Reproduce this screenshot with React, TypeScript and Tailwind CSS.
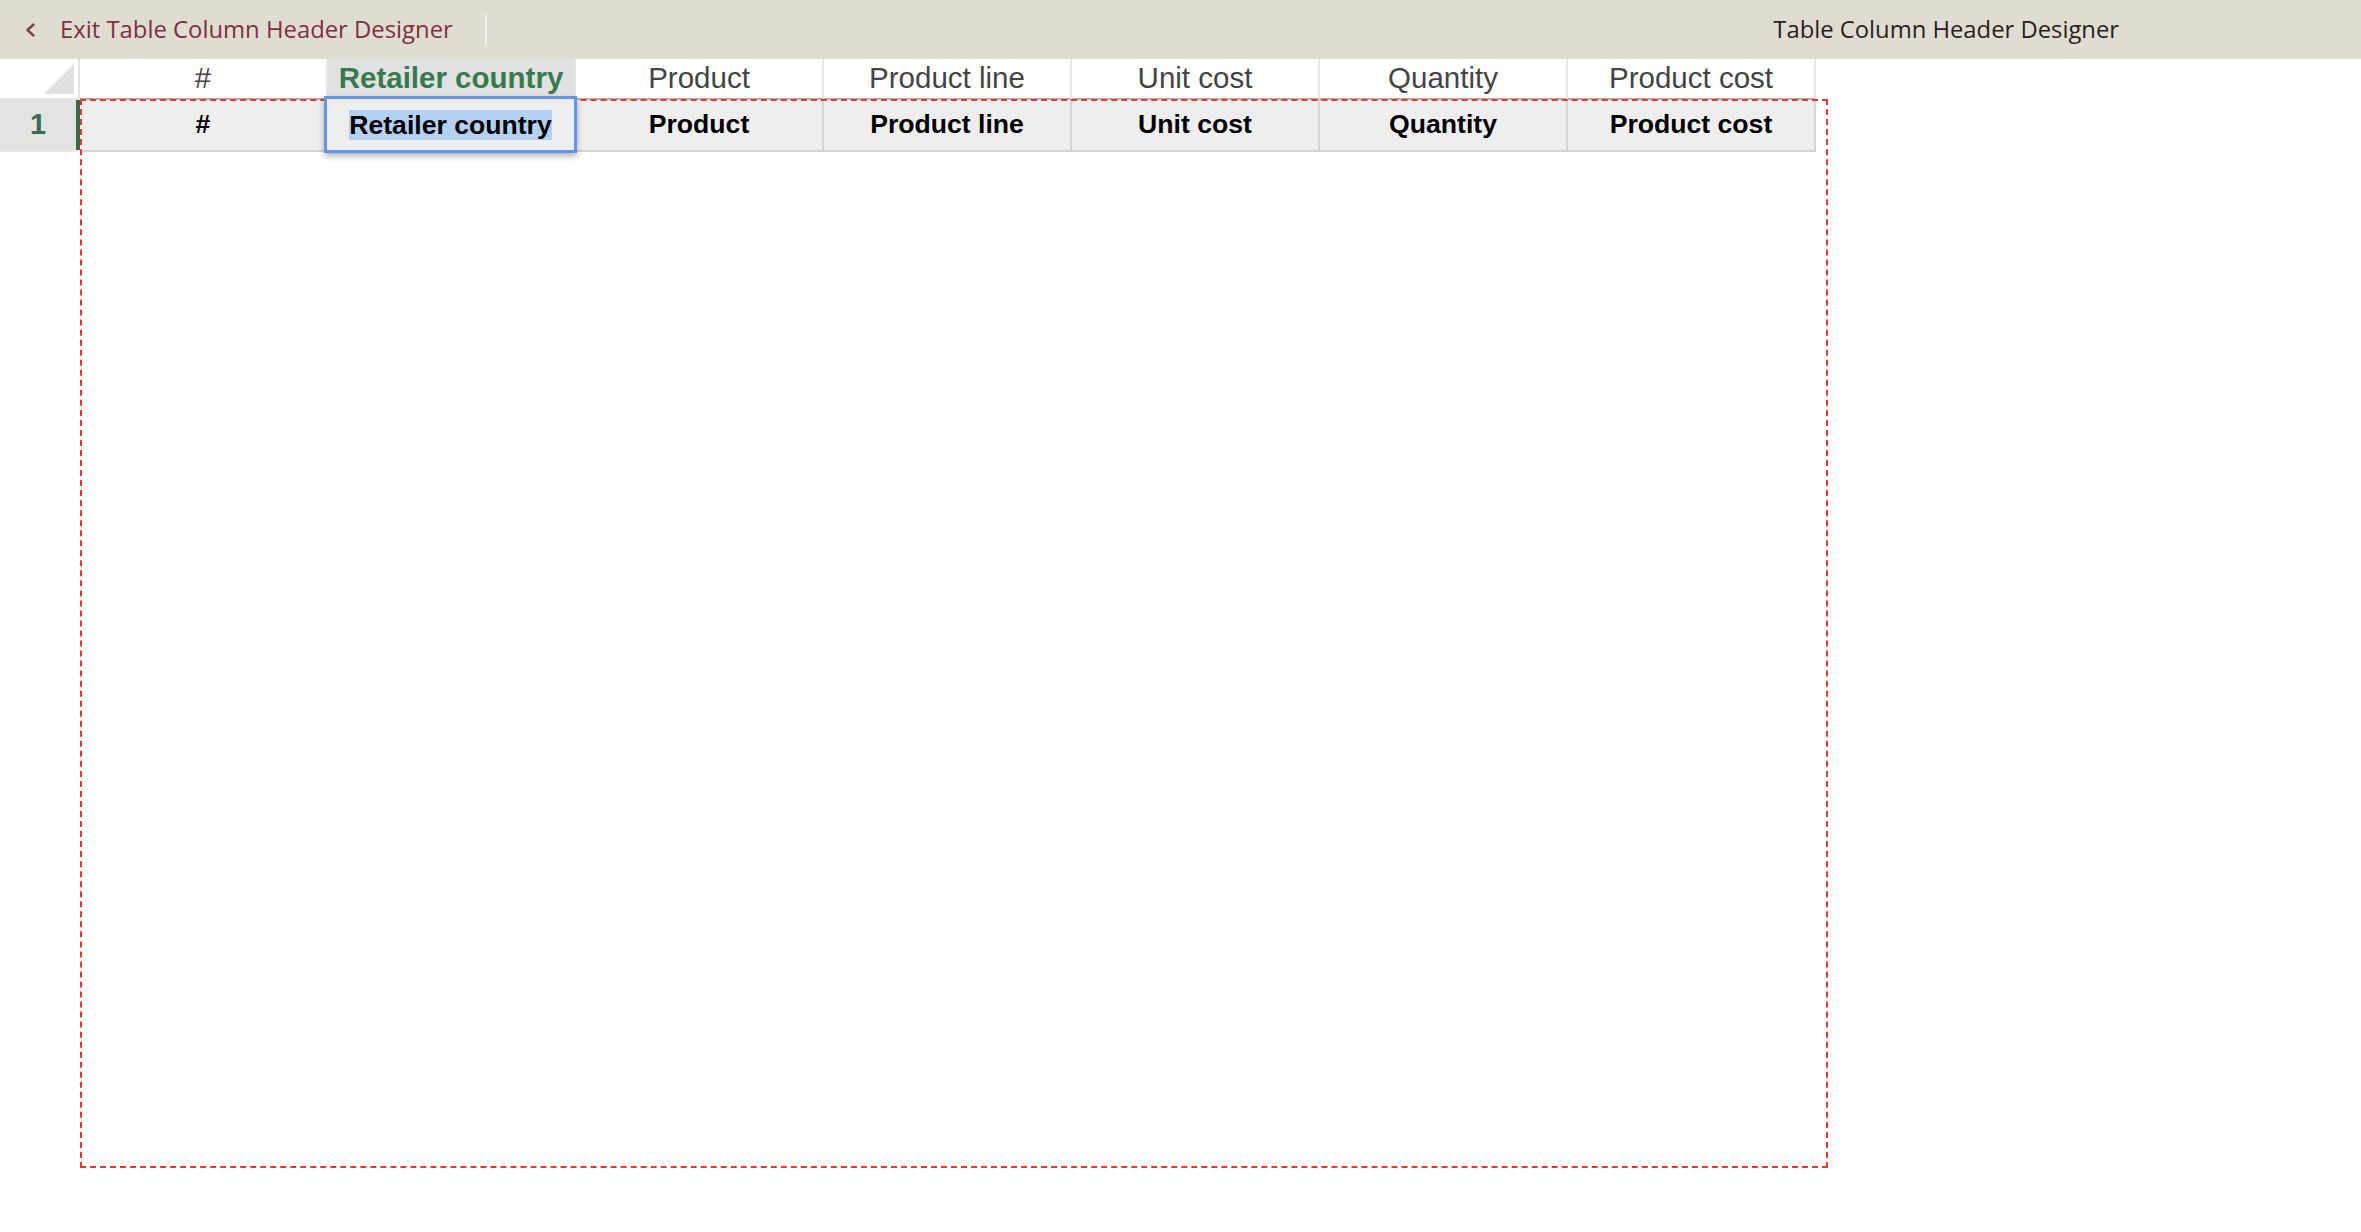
import React from "react";

const cols = ["#", "Retailer country", "Product", "Product line", "Unit cost", "Quantity", "Product cost"];

export default function App() {
  return (
    <div className="relative w-[2361px] h-[1232px] overflow-hidden bg-white">
      {/* Top bar */}
      <div className="flex h-[59px] items-center bg-[#dfddd1] font-['Open_Sans',sans-serif]">
        <div className="ml-[25px] flex h-[14px] w-[10px] items-center">
          <svg width="10" height="14" viewBox="0 0 10 14" fill="none">
            <path d="M8.5 1.5 L2.5 7 L8.5 12.5" stroke="#8a3a4a" strokeWidth="2.4" strokeLinecap="round" strokeLinejoin="round" />
          </svg>
        </div>
        <span className="ml-[25px] text-[23.85px] leading-none text-[#7f3040]">Exit Table Column Header Designer</span>
        <div className="ml-[32px] h-[29px] w-[2px] bg-[#f2f1ea]" />
        <span className="ml-auto mr-[242px] text-[23.8px] leading-none text-[#2a1e1e]">Table Column Header Designer</span>
      </div>

      {/* Grid */}
      <div className="font-['Liberation_Sans',Arial,sans-serif]">
        {/* Header row */}
        <div className="flex">
          <div className="relative h-[41px] w-[80px] border-b-2 border-r-2 border-b-[#e6e6e6] border-r-[#e0e3e0] bg-white">
            <svg className="absolute left-[44px] top-[5px]" width="30" height="30" viewBox="0 0 30 30">
              <polygon points="30,0 30,30 0,30" fill="#e0e0e0" />
            </svg>
          </div>
          {cols.map((c, i) => (
            <div
              key={c}
              className={
                i === 1
                  ? "flex h-[41px] w-[248px] items-center justify-center border-b-2 border-r-2 border-b-[#b0b0b0] border-r-[#e6e6e6] bg-[#e1e1e1] text-[29.5px] font-bold text-[#377a4d]"
                  : "flex h-[41px] w-[248px] items-center justify-center border-b-2 border-r-2 border-b-[#b0b0b0] border-r-[#e6e6e6] bg-white text-[29.5px] text-[#444444]"
              }
            >
              {c}
            </div>
          ))}
        </div>
        {/* Row 1 */}
        <div className="flex">
          <div className="flex h-[52px] w-[80px] border-b-2 border-b-[#eaeaea]">
            <div className="flex h-[50px] w-[76px] items-center justify-center bg-[#e3e3e3] text-[29px] font-bold text-[#3c6e4a]">1</div>
            <div className="h-[50px] w-[4px] bg-[#3a6b47]" />
          </div>
          {cols.map((c) => (
            <div
              key={c}
              className="flex h-[52px] w-[248px] items-center justify-center border-b-2 border-r-2 border-b-[#d4d4d4] border-r-[#d6d6d6] bg-[#eeeeee] text-[26.6px] font-bold text-black"
            >
              {c}
            </div>
          ))}
        </div>
      </div>

      {/* Dashed design region */}
      <div className="pointer-events-none absolute left-[80px] top-[99px] h-[1069px] w-[1748px] border-2 border-dashed border-[#e53b2f]" />

      {/* Selected cell */}
      <div className="absolute left-[324px] top-[96px] flex h-[57px] w-[253px] items-center justify-center border-[3px] border-[#6495ed] bg-[#eeeeee] font-['Liberation_Sans',Arial,sans-serif] shadow-[0_3px_6px_rgba(0,0,0,0.3)]">
        <span className="bg-[#b4d0f4] text-[26.6px] font-bold leading-[30px] text-black">Retailer country</span>
      </div>
    </div>
  );
}
